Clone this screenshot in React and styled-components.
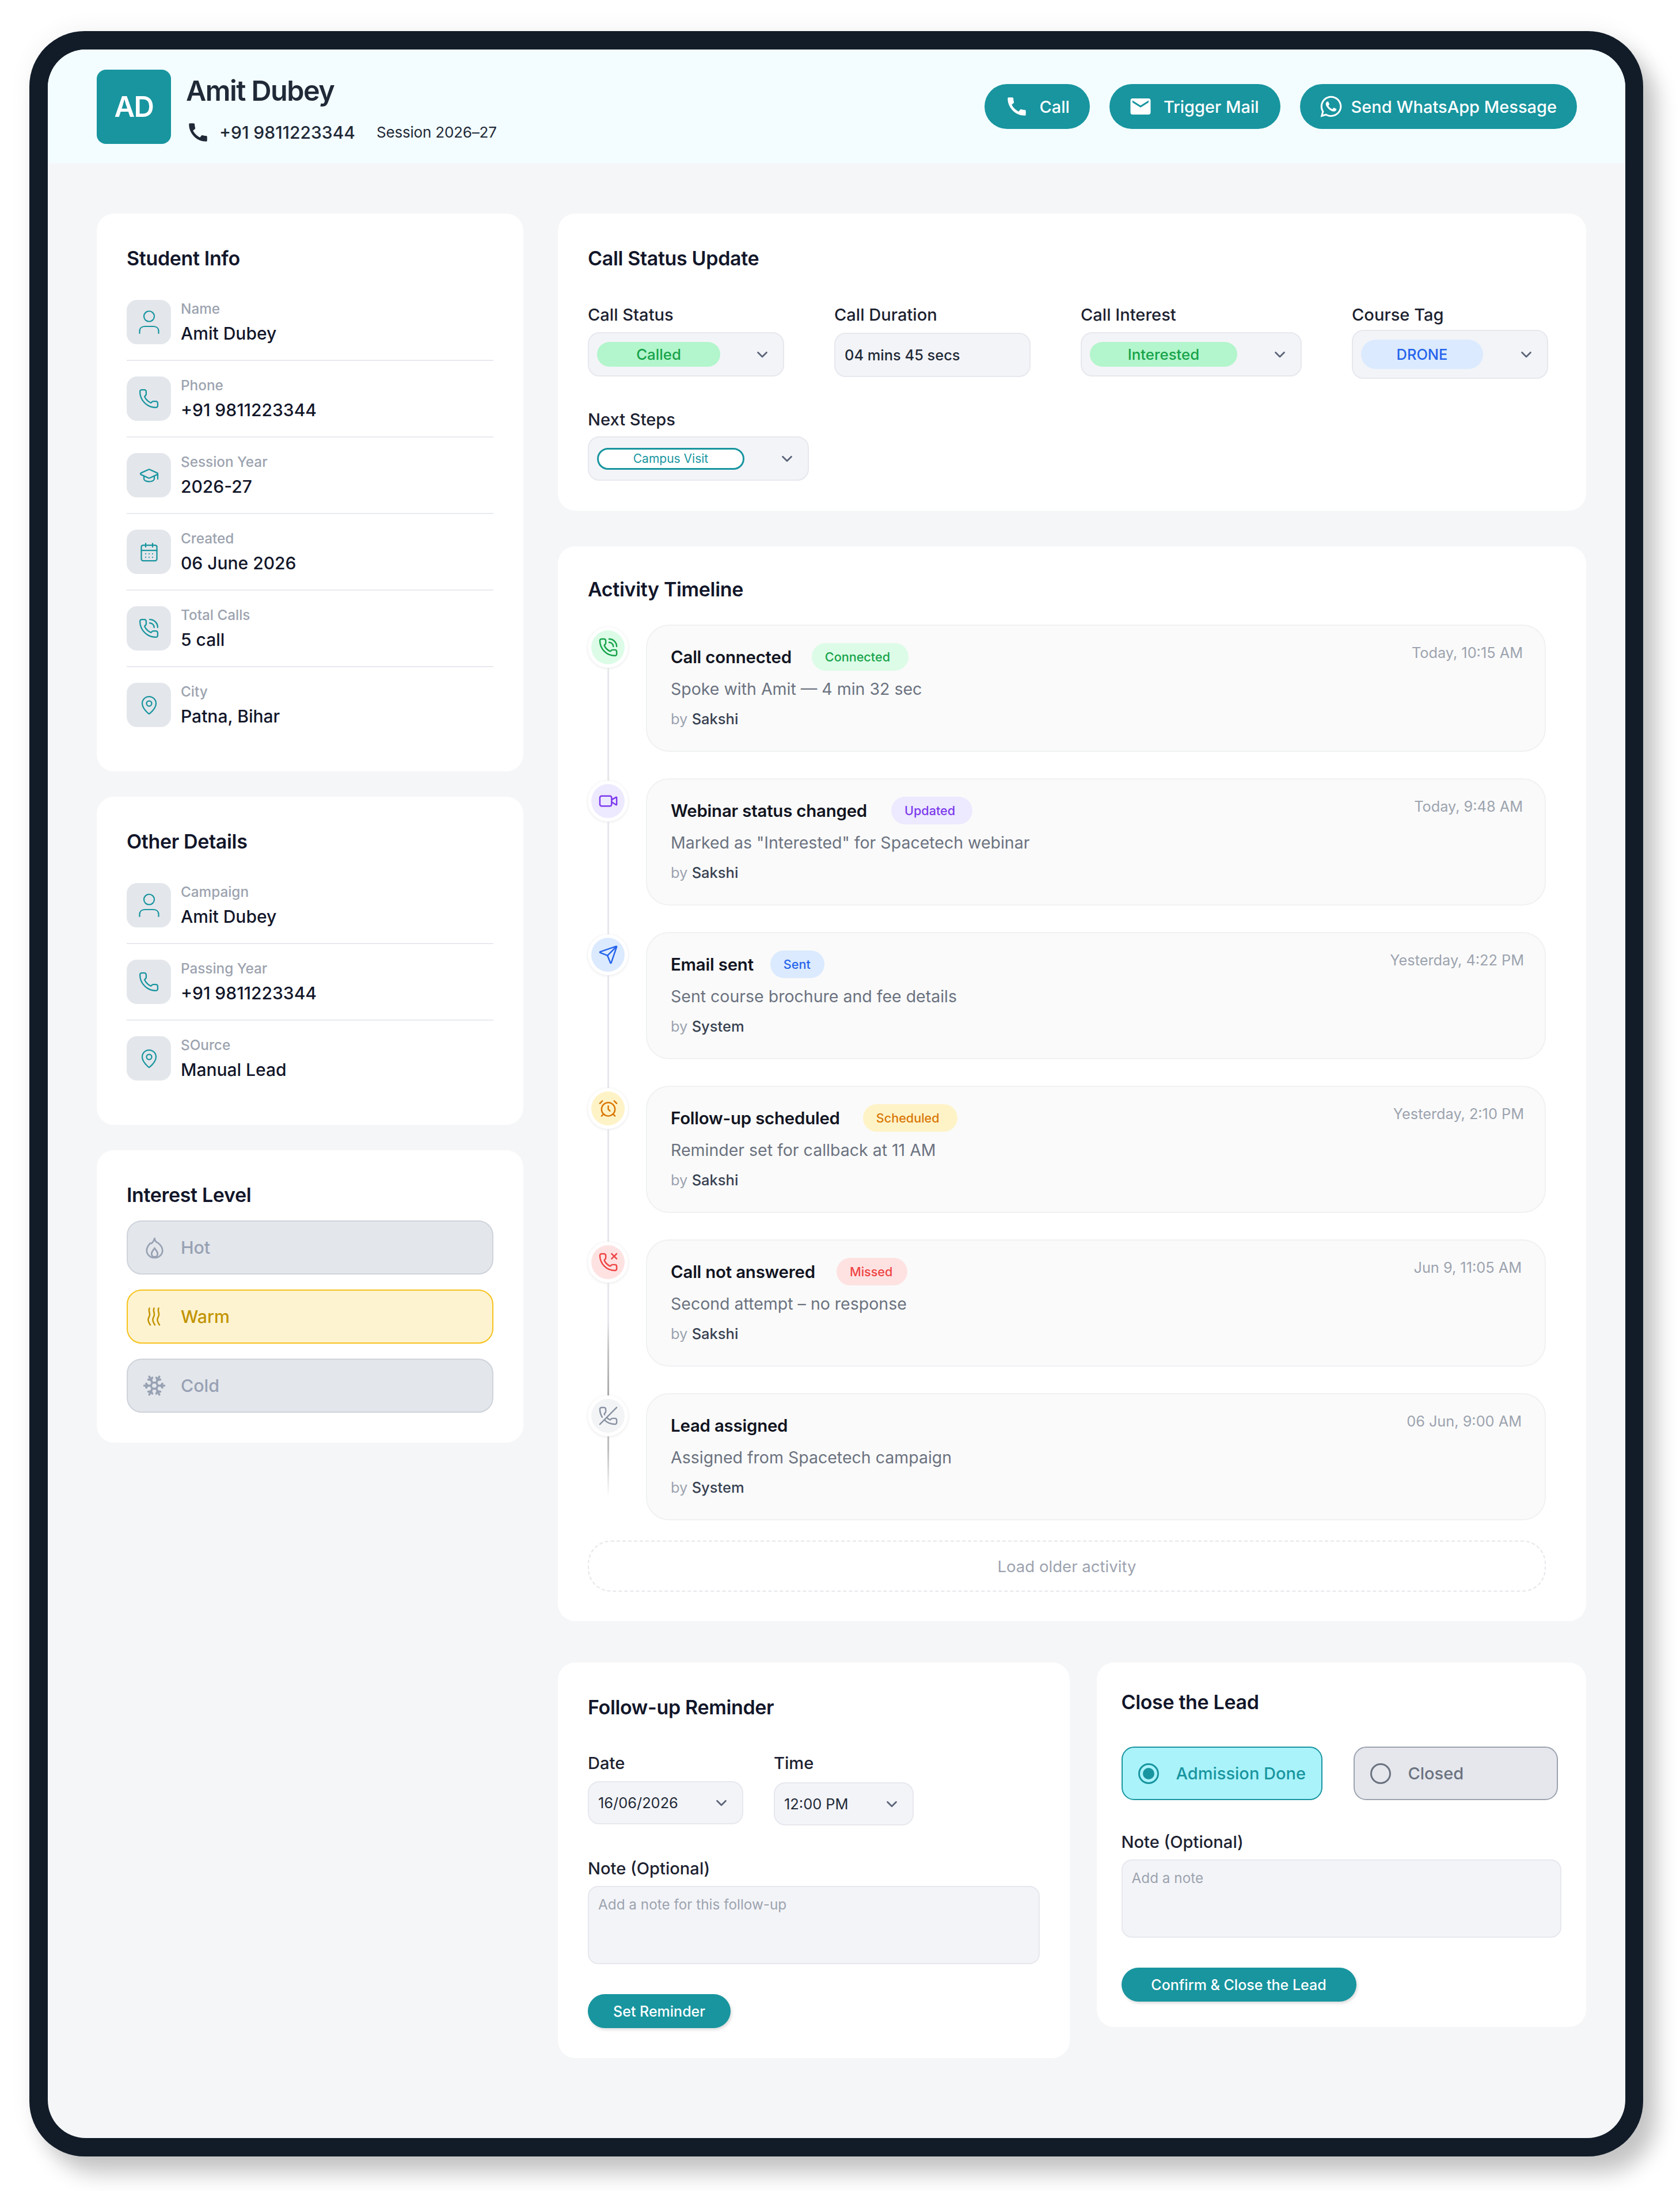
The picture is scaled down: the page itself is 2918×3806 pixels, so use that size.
import React from "react";
import styled, { createGlobalStyle } from "styled-components";
import {
  Phone,
  GraduationCap,
  CalendarDays,
  PhoneCall,
  MapPin,
  Snowflake,
  ChevronDown,
  Video,
  Send,
  AlarmClock,
  PhoneMissed,
  PhoneOff,
} from "lucide-react";
import { MdCall, MdEmail } from "react-icons/md";
import { FaWhatsapp } from "react-icons/fa";

const teal = "#18959f";

const GlobalStyle = createGlobalStyle`
  * { box-sizing: border-box; }
  html, body { margin: 0; background: #fff; }
  body { font-family: Inter, "Noto Sans", sans-serif; color: #111827; }
`;

const Page = styled.div`
  width: 2918px;
  height: 3806px;
  padding: 54px 0 0 51px;
  overflow: hidden;
`;

const Frame = styled.div`
  width: 2803px;
  height: 3692px;
  padding: 32px 31px 32px 32px;
  background: #121c29;
  border-radius: 96px;
  box-shadow: 24px 30px 36px rgba(0, 0, 0, 0.22), 0 -4px 40px rgba(0, 0, 0, 0.05);
`;

const Screen = styled.div`
  height: 100%;
  background: #f5f6f8;
  border-radius: 66px;
  overflow: hidden;
`;

const Header = styled.header`
  height: 198px;
  padding: 0 84px 0 85px;
  background: #f3fdff;
  display: flex;
  align-items: center;
  justify-content: space-between;
`;

const Identity = styled.div`
  display: flex;
  gap: 26px;
`;

const Avatar = styled.div`
  width: 129px;
  height: 129px;
  border-radius: 16px;
  background: ${teal};
  color: #fff;
  font-size: 49px;
  font-weight: 600;
  letter-spacing: -1.5px;
  display: flex;
  align-items: center;
  justify-content: center;
`;

const IdentityText = styled.div`
  padding-top: 9px;
  display: flex;
  flex-direction: column;
  gap: 24px;
`;

const HeadName = styled.div`
  font-size: 48.5px;
  line-height: 56px;
  font-weight: 600;
  letter-spacing: -1.5px;
  color: #1f2937;
`;

const Meta = styled.div`
  height: 40px;
  display: flex;
  align-items: center;
  color: #1f2937;
`;

const MetaPhone = styled.span`
  margin-left: 16px;
  font-size: 30px;
  font-weight: 500;
`;

const MetaSession = styled.span`
  margin-left: 37px;
  font-size: 26px;
  letter-spacing: -0.2px;
`;

const Actions = styled.div`
  display: flex;
  gap: 34px;
`;

const ActionButton = styled.button`
  height: 78px;
  padding: 0 ${(p) => p.$right}px 0 ${(p) => p.$left}px;
  border: 0;
  border-radius: 39px;
  background: ${teal};
  color: #fff;
  font-family: inherit;
  font-size: 29px;
  font-weight: 500;
  display: flex;
  align-items: center;
  gap: ${(p) => p.$gap}px;
`;

const Body = styled.div`
  padding: 87px 68px 0 85px;
  display: flex;
  gap: 60px;
  align-items: flex-start;
`;

const LeftCol = styled.div`
  width: 741px;
  display: flex;
  flex-direction: column;
  gap: 44px;
`;

const RightCol = styled.div`
  width: 1786px;
  display: flex;
  flex-direction: column;
`;

const Card = styled.section`
  background: #fff;
  border-radius: 30px;
  padding: 52px;
`;

const CardTitle = styled.h2`
  margin: 0;
  font-size: 34px;
  line-height: 52px;
  font-weight: 600;
  letter-spacing: -0.35px;
  color: #12162a;
`;

const InfoList = styled.div`
  margin-top: 46px;
  margin-bottom: 25px;
`;

const InfoRow = styled.div`
  display: flex;
  gap: 17px;
  padding: 27px 0;
  border-bottom: 2px solid #e9eaf0;
  &:first-child {
    padding-top: 0;
  }
  &:last-child {
    padding-bottom: 0;
    border-bottom: 0;
  }
`;

const IconBox = styled.div`
  width: 77px;
  height: 77px;
  border-radius: 18px;
  background: #e3e6eb;
  color: ${teal};
  display: flex;
  align-items: center;
  justify-content: center;
  flex-shrink: 0;
`;

const InfoText = styled.div`
  display: flex;
  flex-direction: column;
`;

const InfoLabel = styled.div`
  font-size: 24.3px;
  line-height: 30px;
  font-weight: 500;
  color: #9ca3af;
`;

const InfoValue = styled.div`
  margin-top: 11px;
  font-size: 30px;
  line-height: 34px;
  font-weight: 500;
  color: #12162a;
`;

const LevelList = styled.div`
  margin-top: 18px;
  display: flex;
  flex-direction: column;
  gap: 26px;
`;

const LevelRow = styled.div`
  height: 94px;
  border-radius: 26px;
  border: 2px solid ${(p) => (p.$active ? "#f6c21c" : "#cfd3db")};
  background: ${(p) => (p.$active ? "#fef3d1" : "#e3e6eb")};
  color: ${(p) => (p.$active ? "#c29400" : "#97a1b3")};
  display: flex;
  align-items: center;
  font-size: 30.3px;
  font-weight: 500;
`;

const LevelIcon = styled.div`
  width: 92px;
  display: flex;
  justify-content: center;
  flex-shrink: 0;
`;

const FieldRow = styled.div`
  margin-top: 54px;
  display: flex;
  gap: 87px;
`;

const FieldCol = styled.div`
  display: flex;
  flex-direction: column;
  margin-top: ${(p) => p.$top || 0}px;
`;

const FieldLabel = styled.label`
  font-size: 29.1px;
  line-height: 36px;
  color: #1c2130;
  font-weight: 500;
`;

const ControlSlot = styled.div`
  height: ${(p) => p.$h || 85}px;
  margin-top: ${(p) => p.$mt || 0}px;
  display: flex;
  align-items: center;
`;

const Select = styled.div`
  width: ${(p) => p.$w}px;
  height: ${(p) => p.$h || 77}px;
  margin-top: ${(p) => p.$nudge || 0}px;
  padding: 0 ${(p) => p.$right || 21}px 0 ${(p) => p.$left || 14}px;
  background: #f3f4f8;
  border: 2px solid #e7e8ee;
  border-radius: 20px;
  display: flex;
  align-items: center;
  justify-content: space-between;
  color: #5b6478;
  font-size: 25.4px;
  svg { flex-shrink: 0; }
`;

const SelectText = styled.span`
  color: #1f2937;
  font-weight: ${(p) => p.$weight || 400};
`;

const Pill = styled.span`
  width: ${(p) => p.$w}px;
  height: ${(p) => p.$h || 43}px;
  border-radius: ${(p) => p.$h || 43}px;
  background: ${(p) => p.$bg};
  color: ${(p) => p.$fg};
  font-size: ${(p) => p.$size || 25.8}px;
  font-weight: ${(p) => p.$weight || 500};
  display: flex;
  align-items: center;
  justify-content: center;
  border: ${(p) => (p.$outline ? `3px solid ${p.$fg}` : "0")};
`;

const ActivityCard = styled(Card)`
  margin-top: 62px;
  padding: 49px 70px 51px 52px;
`;

const Timeline = styled.div`
  margin-top: 35px;
`;

const TimelineRow = styled.div`
  display: flex;
  height: ${(p) => (p.$last ? 221 : 267)}px;
`;

const Rail = styled.div`
  width: 70px;
  margin-right: 31px;
  padding-top: 4px;
  display: flex;
  flex-direction: column;
  align-items: center;
  flex-shrink: 0;
`;

const Dot = styled.div`
  width: 70px;
  height: 71px;
  border-radius: 50%;
  border: 6px solid #fff;
  background: ${(p) => p.$bg};
  color: ${(p) => p.$fg};
  box-shadow: 0 1px 5px rgba(17, 24, 39, 0.1);
  display: flex;
  align-items: center;
  justify-content: center;
  flex-shrink: 0;
`;

const Connector = styled.div`
  width: 3px;
  flex: 1;
  margin-bottom: ${(p) => (p.$variant === "end" ? 41 : -4)}px;
  background: ${(p) =>
    p.$variant === "end"
      ? "linear-gradient(#bdbdbd 20%, rgba(190,190,190,0))"
      : p.$variant === "dark"
      ? "linear-gradient(#e5e7eb 35%, #c4c4c4 60%, #a9a9a9)"
      : "#e5e7eb"};
`;

const EventCard = styled.div`
  flex: 1;
  height: 221px;
  padding: 0 39px 0 41px;
  background: #fafafa;
  border: 2px solid #f0f1f3;
  border-radius: 40px;
  position: relative;
`;

const EventHead = styled.div`
  height: 48px;
  margin-top: 30px;
  display: flex;
  align-items: center;
  gap: ${(p) => p.$gap}px;
`;

const EventTitle = styled.div`
  font-size: 29.4px;
  font-weight: 600;
  letter-spacing: -0.2px;
  color: #111421;
`;

const Badge = styled.span`
  width: ${(p) => p.$w}px;
  height: 48px;
  padding-left: 23px;
  border-radius: 24px;
  background: ${(p) => p.$bg};
  color: ${(p) => p.$fg};
  font-size: 21.6px;
  font-weight: 500;
  display: flex;
  align-items: center;
`;

const EventTime = styled.span`
  position: absolute;
  top: 32px;
  right: ${(p) => p.$right || 38}px;
  font-size: 25.3px;
  line-height: 30px;
  color: #9ca3af;
`;

const EventDesc = styled.div`
  margin-top: 13px;
  font-size: 28.5px;
  line-height: 38px;
  color: #6b7280;
`;

const EventBy = styled.div`
  margin-top: 17px;
  font-size: 25.5px;
  line-height: 32px;
  color: #9ca3af;
  b {
    font-weight: 500;
    color: #374151;
  }
`;

const LoadMore = styled.div`
  margin-top: 35px;
  height: 89px;
  border: 2px dashed #e5e7eb;
  border-radius: 40px;
  color: #9ca3af;
  font-size: 27.6px;
  display: flex;
  align-items: center;
  justify-content: center;
`;

const BottomRow = styled.div`
  margin-top: 72px;
  display: flex;
  gap: 47px;
  align-items: flex-start;
`;

const ReminderCard = styled(Card)`
  width: 889px;
`;

const CloseCard = styled(Card)`
  width: 851px;
  padding: 43px 43px 44px;
`;

const DateRow = styled.div`
  margin-top: 53px;
  display: flex;
  gap: 53px;
`;

const NoteBox = styled.div`
  height: 136px;
  margin-top: 12px;
  padding: 15px 16px;
  background: #f3f4f8;
  border: 2px solid #e7e8ee;
  border-radius: 18px;
  font-size: 24.3px;
  line-height: 30px;
  color: #9ca3af;
`;

const SubmitButton = styled.button`
  display: block;
  height: 59px;
  margin-top: 52px;
  padding: 0;
  width: ${(p) => p.$w}px;
  border: 0;
  border-radius: 30px;
  background: ${teal};
  color: #fff;
  font-family: inherit;
  font-size: 25px;
  font-weight: 500;
  box-shadow: 2px 3px 5px rgba(0, 0, 0, 0.14);
`;

const CloseOptions = styled.div`
  margin-top: 51px;
  display: flex;
  gap: 54px;
`;

const CloseOption = styled.div`
  width: ${(p) => p.$w}px;
  height: 93px;
  padding-left: 27px;
  border-radius: 22px;
  border: 2.5px solid ${(p) => (p.$active ? teal : "#9ca3af")};
  background: ${(p) => (p.$active ? "#aaf3fb" : "#e5e7ec")};
  color: ${(p) => (p.$active ? teal : "#6b7280")};
  font-size: 29px;
  font-weight: 500;
  display: flex;
  align-items: center;
  gap: 30px;
`;

const Radio = styled.span`
  width: 36px;
  height: 36px;
  border-radius: 50%;
  border: 3.5px solid currentColor;
  display: flex;
  align-items: center;
  justify-content: center;
  flex-shrink: 0;
  &::after {
    content: "";
    display: ${(p) => (p.$on ? "block" : "none")};
    width: 20px;
    height: 20px;
    border-radius: 50%;
    background: currentColor;
  }
`;

function UserIcon() {
  return (
    <svg width="36" height="42" viewBox="0 0 36 42" fill="none" stroke="currentColor" strokeWidth="2.2" strokeLinecap="round">
      <circle cx="18" cy="10.5" r="9" />
      <path d="M1.500 40v-3.500c0-5 3.500-8.500 9-8.500h15c5.500 0 9 3.500 9 8.500V40" />
    </svg>
  );
}

function FlameIcon() {
  return (
    <svg width="33" height="37" viewBox="0 0 30 35" fill="none" stroke="currentColor" strokeWidth="2.6" strokeLinejoin="round">
      <path d="M15 2c.5 4 2.500 6.500 5 7 4.500 3.500 8 8 8 13a13 12 0 0 1-26 0c0-5 3-9 6-12 1.500 1.500 5-1.500 7-8z" />
      <path d="M15 18c1.500 3 5 5 5 9.500a5 5 0 0 1-10 0c0-4.500 3.500-6.500 5-9.500z" />
    </svg>
  );
}

function WarmIcon() {
  const wave = "c-2.500 5.500 2.500 9-.2 14s-2.800 8 1.700 15";
  return (
    <svg width="25" height="32" viewBox="0 0 25 32" fill="none" stroke="currentColor" strokeWidth="2.6" strokeLinecap="round">
      <path d={`M3.500 1.500${wave}`} />
      <path d={`M11.500 1.500${wave}`} />
      <path d={`M19.500 1.500${wave}`} />
    </svg>
  );
}

const thin = { strokeWidth: 1.5 };

const studentInfo = [
  { icon: <UserIcon />, label: "Name", value: "Amit Dubey" },
  { icon: <Phone size={37} {...thin} />, label: "Phone", value: "+91 9811223344" },
  { icon: <GraduationCap size={36} {...thin} />, label: "Session Year", value: "2026-27" },
  { icon: <CalendarDays size={36} {...thin} />, label: "Created", value: "06 June 2026" },
  { icon: <PhoneCall size={37} {...thin} />, label: "Total Calls", value: "5 call" },
  { icon: <MapPin size={36} {...thin} />, label: "City", value: "Patna, Bihar" },
];

const otherDetails = [
  { icon: <UserIcon />, label: "Campaign", value: "Amit Dubey" },
  { icon: <Phone size={37} {...thin} />, label: "Passing Year", value: "+91 9811223344" },
  { icon: <MapPin size={36} {...thin} />, label: "SOurce", value: "Manual Lead" },
];

const dotIcon = { size: 35, strokeWidth: 1.7 };

const events = [
  {
    Icon: PhoneCall,
    dotBg: "#dcfce7",
    dotFg: "#16a34a",
    title: "Call connected",
    badge: "Connected",
    badgeW: 168,
    gap: 35,
    badgeBg: "#dcfce7",
    badgeFg: "#16a34a",
    time: "Today, 10:15 AM",
    desc: "Spoke with Amit — 4 min 32 sec",
    by: "Sakshi",
  },
  {
    Icon: Video,
    dotBg: "#ede9fe",
    dotFg: "#7c3aed",
    title: "Webinar status changed",
    badge: "Updated",
    badgeW: 141,
    gap: 42,
    badgeBg: "#ede9fe",
    badgeFg: "#7c3aed",
    time: "Today, 9:48 AM",
    desc: 'Marked as "Interested" for Spacetech webinar',
    by: "Sakshi",
  },
  {
    Icon: Send,
    dotBg: "#dbeafe",
    dotFg: "#2563eb",
    title: "Email sent",
    badge: "Sent",
    badgeW: 94,
    gap: 29,
    badgeBg: "#dbeafe",
    badgeFg: "#2563eb",
    time: "Yesterday, 4:22 PM",
    timeRight: 36,
    desc: "Sent course brochure and fee details",
    by: "System",
  },
  {
    Icon: AlarmClock,
    dotBg: "#fef3c7",
    dotFg: "#d97706",
    title: "Follow-up scheduled",
    badge: "Scheduled",
    badgeW: 164,
    gap: 40,
    badgeBg: "#fef3c7",
    badgeFg: "#d97706",
    time: "Yesterday, 2:10 PM",
    timeRight: 36,
    desc: "Reminder set for callback at 11 AM",
    by: "Sakshi",
  },
  {
    Icon: PhoneMissed,
    dotBg: "#fee2e2",
    dotFg: "#ef4444",
    title: "Call not answered",
    badge: "Missed",
    badgeW: 123,
    gap: 37,
    badgeBg: "#fee2e2",
    badgeFg: "#ef4444",
    time: "Jun 9, 11:05 AM",
    timeRight: 40,
    desc: "Second attempt – no response",
    by: "Sakshi",
    line: "dark",
  },
  {
    Icon: PhoneOff,
    dotBg: "#f3f4f6",
    dotFg: "#8a93a3",
    title: "Lead assigned",
    time: "06 Jun, 9:00 AM",
    timeRight: 40,
    desc: "Assigned from Spacetech campaign",
    by: "System",
    line: "end",
  },
];

function Chevron() {
  return <ChevronDown size={30} strokeWidth={2.2} />;
}

function InfoRows({ items }) {
  return (
    <InfoList>
      {items.map((item) => (
        <InfoRow key={item.label}>
          <IconBox>{item.icon}</IconBox>
          <InfoText>
            <InfoLabel>{item.label}</InfoLabel>
            <InfoValue>{item.value}</InfoValue>
          </InfoText>
        </InfoRow>
      ))}
    </InfoList>
  );
}

export default function App() {
  return (
    <Page>
      <GlobalStyle />
      <Frame>
        <Screen>
          <Header>
            <Identity>
              <Avatar>AD</Avatar>
              <IdentityText>
                <HeadName>Amit Dubey</HeadName>
                <Meta>
                  <MdCall size={42} />
                  <MetaPhone>+91 9811223344</MetaPhone>
                  <MetaSession>Session 2026–27</MetaSession>
                </Meta>
              </IdentityText>
            </Identity>
            <Actions>
              <ActionButton $left={35} $right={35} $gap={19}>
                <MdCall size={42} />
                Call
              </ActionButton>
              <ActionButton $left={33} $right={37} $gap={19}>
                <MdEmail size={42} />
                Trigger Mail
              </ActionButton>
              <ActionButton $left={33} $right={35} $gap={14}>
                <FaWhatsapp size={42} />
                Send WhatsApp Message
              </ActionButton>
            </Actions>
          </Header>

          <Body>
            <LeftCol>
              <Card>
                <CardTitle>Student Info</CardTitle>
                <InfoRows items={studentInfo} />
              </Card>
              <Card>
                <CardTitle>Other Details</CardTitle>
                <InfoRows items={otherDetails} />
              </Card>
              <Card>
                <CardTitle>Interest Level</CardTitle>
                <LevelList>
                  <LevelRow>
                    <LevelIcon><FlameIcon /></LevelIcon>
                    Hot
                  </LevelRow>
                  <LevelRow $active>
                    <LevelIcon><WarmIcon /></LevelIcon>
                    Warm
                  </LevelRow>
                  <LevelRow>
                    <LevelIcon><Snowflake size={42} strokeWidth={2} /></LevelIcon>
                    Cold
                  </LevelRow>
                </LevelList>
              </Card>
            </LeftCol>

            <RightCol>
              <Card>
                <CardTitle>Call Status Update</CardTitle>
                <FieldRow>
                  <FieldCol>
                    <FieldLabel>Call Status</FieldLabel>
                    <ControlSlot $mt={8}>
                      <Select $w={341}>
                        <Pill $w={214} $bg="#b3f5cc" $fg="#16a34a">Called</Pill>
                        <Chevron />
                      </Select>
                    </ControlSlot>
                  </FieldCol>
                  <FieldCol>
                    <FieldLabel>Call Duration</FieldLabel>
                    <ControlSlot $mt={8}>
                      <Select $w={341} $nudge={2} $left={16}>
                        <SelectText $weight={500}>04 mins 45 secs</SelectText>
                      </Select>
                    </ControlSlot>
                  </FieldCol>
                  <FieldCol>
                    <FieldLabel>Call Interest</FieldLabel>
                    <ControlSlot $mt={8}>
                      <Select $w={384}>
                        <Pill $w={256} $bg="#b3f5cc" $fg="#16a34a">Interested</Pill>
                        <Chevron />
                      </Select>
                    </ControlSlot>
                  </FieldCol>
                  <FieldCol>
                    <FieldLabel>Course Tag</FieldLabel>
                    <ControlSlot $mt={8}>
                      <Select $w={341} $h={85}>
                        <Pill $w={212} $h={51} $bg="#dbeafe" $fg="#2563eb" $size={25.4}>DRONE</Pill>
                        <Chevron />
                      </Select>
                    </ControlSlot>
                  </FieldCol>
                </FieldRow>
                <FieldCol $top={53}>
                  <FieldLabel>Next Steps</FieldLabel>
                  <ControlSlot $mt={11} $h={77}>
                    <Select $w={384}>
                      <Pill $w={256} $h={38} $outline $bg="#fff" $fg={teal} $size={21} $weight={400}>Campus Visit</Pill>
                      <Chevron />
                    </Select>
                  </ControlSlot>
                </FieldCol>
              </Card>

              <ActivityCard>
                <CardTitle>Activity Timeline</CardTitle>
                <Timeline>
                  {events.map((ev) => (
                    <TimelineRow key={ev.title} $last={ev.line === "end"}>
                      <Rail>
                        <Dot $bg={ev.dotBg} $fg={ev.dotFg}>
                          <ev.Icon {...dotIcon} />
                        </Dot>
                        <Connector $variant={ev.line} />
                      </Rail>
                      <EventCard>
                        <EventHead $gap={ev.gap}>
                          <EventTitle>{ev.title}</EventTitle>
                          {ev.badge && <Badge $w={ev.badgeW} $bg={ev.badgeBg} $fg={ev.badgeFg}>{ev.badge}</Badge>}
                        </EventHead>
                        <EventTime $right={ev.timeRight}>{ev.time}</EventTime>
                        <EventDesc>{ev.desc}</EventDesc>
                        <EventBy>by <b>{ev.by}</b></EventBy>
                      </EventCard>
                    </TimelineRow>
                  ))}
                </Timeline>
                <LoadMore>Load older activity</LoadMore>
              </ActivityCard>

              <BottomRow>
                <ReminderCard>
                  <CardTitle>Follow-up Reminder</CardTitle>
                  <DateRow>
                    <FieldCol>
                      <FieldLabel>Date</FieldLabel>
                      <ControlSlot $mt={13} $h={75}>
                        <Select $w={270} $h={75} $left={16}>
                          <SelectText>16/06/2026</SelectText>
                          <Chevron />
                        </Select>
                      </ControlSlot>
                    </FieldCol>
                    <FieldCol>
                      <FieldLabel>Time</FieldLabel>
                      <ControlSlot $mt={13} $h={77}>
                        <Select $w={243} $h={75} $nudge={2} $left={16}>
                          <SelectText>12:00 PM</SelectText>
                          <Chevron />
                        </Select>
                      </ControlSlot>
                    </FieldCol>
                  </DateRow>
                  <FieldCol $top={57}>
                    <FieldLabel>Note (Optional)</FieldLabel>
                    <NoteBox>Add a note for this follow-up</NoteBox>
                  </FieldCol>
                  <SubmitButton $w={248}>Set Reminder</SubmitButton>
                </ReminderCard>

                <CloseCard>
                  <CardTitle>Close the Lead</CardTitle>
                  <CloseOptions>
                    <CloseOption $w={349} $active>
                      <Radio $on />
                      Admission Done
                    </CloseOption>
                    <CloseOption $w={355}>
                      <Radio />
                      Closed
                    </CloseOption>
                  </CloseOptions>
                  <FieldCol $top={55}>
                    <FieldLabel>Note (Optional)</FieldLabel>
                    <NoteBox>Add a note</NoteBox>
                  </FieldCol>
                  <SubmitButton $w={408}>Confirm &amp; Close the Lead</SubmitButton>
                </CloseCard>
              </BottomRow>
            </RightCol>
          </Body>
        </Screen>
      </Frame>
    </Page>
  );
}
